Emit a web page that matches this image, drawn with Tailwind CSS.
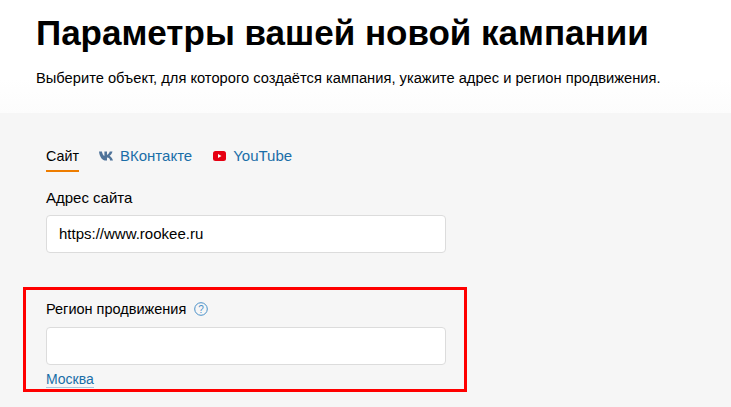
<!DOCTYPE html>
<html><head><meta charset="utf-8"><script src="https://cdn.jsdelivr.net/npm/@tailwindcss/browser@4"></script></head>
<body class="w-[731px] h-[407px] overflow-hidden bg-[#f6f6f6] relative font-['Liberation_Sans',Arial,sans-serif] text-black">
<header class="h-[113px] bg-gradient-to-b from-white from-70% to-[#fcfcfc] pl-[36px] pt-[12px]">
  <h1 class="text-[35px] leading-[42px] font-bold">Параметры вашей новой кампании</h1>
  <p class="text-[14.7px] leading-[18px] mt-[15px]">Выберите объект, для которого создаётся кампания, укажите адрес и регион продвижения.</p>
</header>
<main class="pl-[46px] w-[446px] box-content">
  <nav class="flex items-start h-[59px] pt-[34px] text-[15px] leading-[18px] text-[#1a6ea8]">
    <span class="text-black text-[14.3px] h-[25px] border-b-2 border-[#ee7d00] w-[33px]">Сайт</span>
    <span class="ml-[20px] flex items-center gap-[5px]">
      <svg class="w-[16px] h-[10px]" viewBox="0 0 16 10"><path fill="#4f7399" d="M0 .4h2.9c.3 2 1.500 4.400 2.500 4.600V.4h2.600v3.500c1-.2 2.100-1.800 2.800-3.500h2.700c-.5 2-1.900 3.700-3 4.400 1.200.7 2.700 2.200 3.500 4.800h-3C11.300 8 10 6.700 8 6.500v3.100H7C3.400 9.600.6 6 0 .4z"/></svg>
      <span>ВКонтакте</span>
    </span>
    <span class="ml-[21px] flex items-center gap-[7px]">
      <svg class="w-[13px] h-[10px]" viewBox="0 0 13 10"><rect width="13" height="10" rx="2.500" fill="#e60012"/><path fill="#fff" d="M5 3l3.500 2L5 7z"/></svg>
      <span>YouTube</span>
    </span>
  </nav>
  <label class="block text-[15px] leading-[18px] h-[18px] mt-[17px]">Адрес сайта</label>
  <div class="mt-[8px] h-[38px] w-[400px] bg-white border border-[#dcdcdc] rounded-[4px] pl-[12px] flex items-center text-[15px]">https://www.rookee.ru</div>
  <div class="flex items-center h-[18px] mt-[47px] text-[14.5px] leading-[18px]">
    <span>Регион продвижения</span>
    <svg class="ml-[8px] w-[14px] h-[14px]" viewBox="0 0 14 14"><circle cx="7" cy="7" r="6.300" fill="none" stroke="#4a90c8" stroke-width="1"/><text x="7" y="10.500" text-anchor="middle" font-size="10" fill="#4a90c8" font-family="Liberation Sans">?</text></svg>
  </div>
  <div class="mt-[9px] h-[38px] w-[400px] bg-white border border-[#dcdcdc] rounded-[4px]"></div>
  <a class="block w-fit mt-[7px] text-[14px] leading-[15px] text-[#1a6ea8] border-b border-[#a9c6dd]">Москва</a>
</main>
<div class="absolute left-[23px] top-[287px] w-[444px] h-[105px] border-[3px] border-[#ff0000]"></div>
</body></html>
